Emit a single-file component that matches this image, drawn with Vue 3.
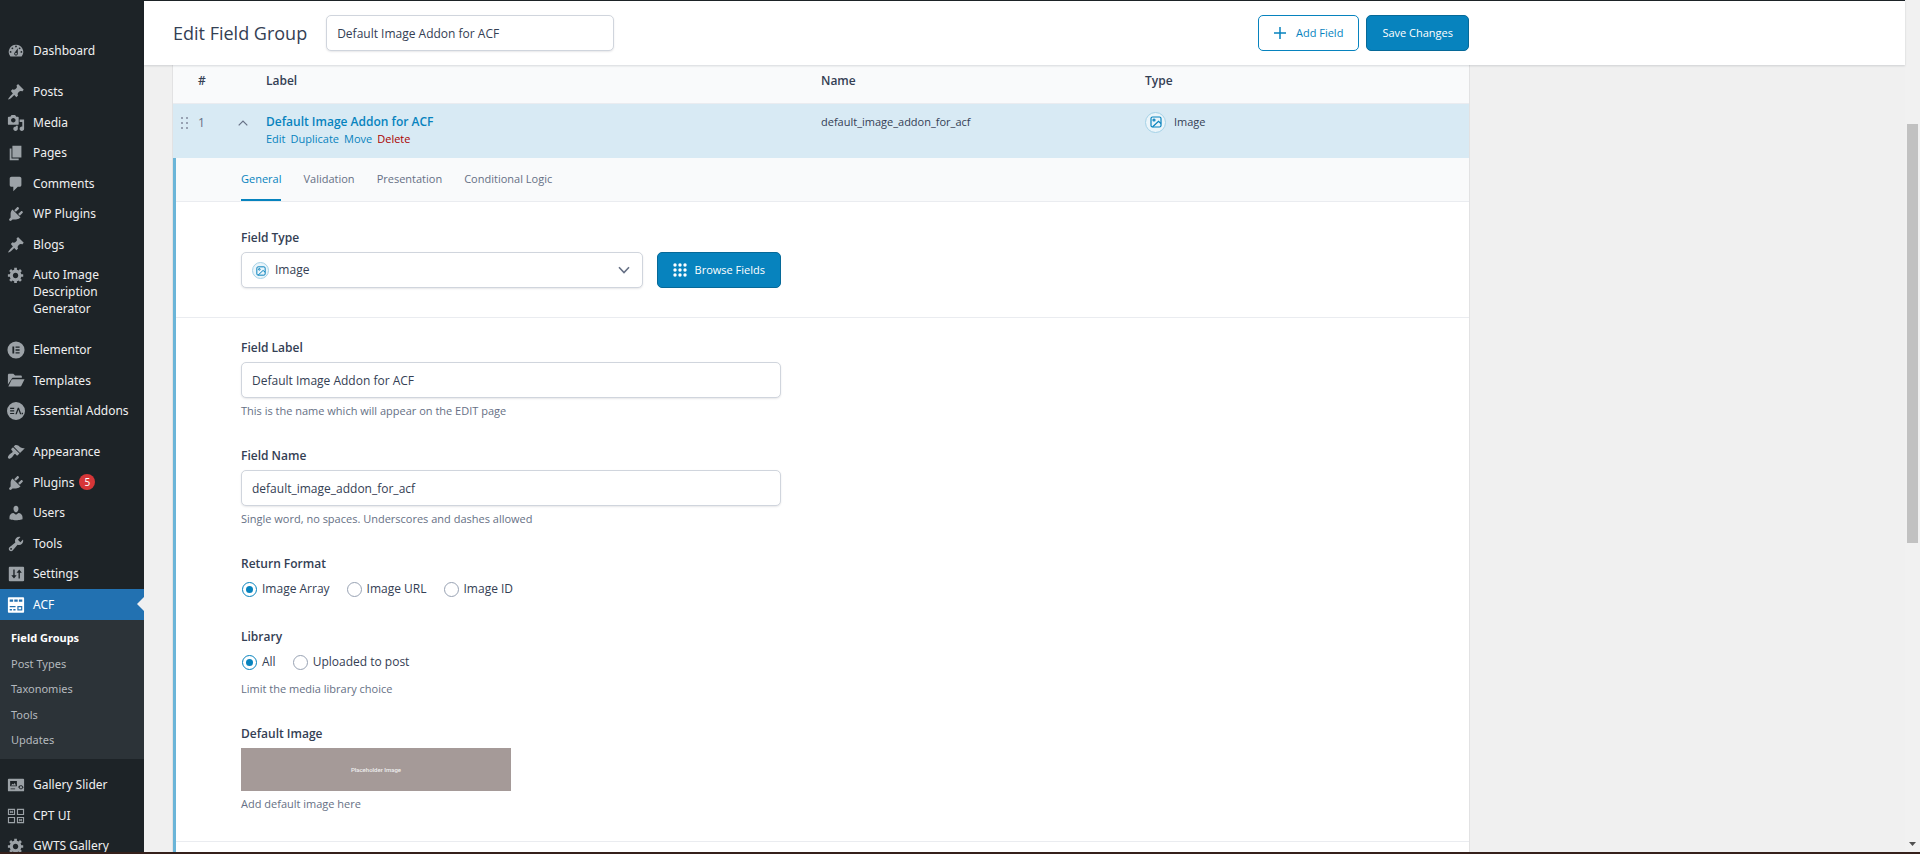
<script setup>
import { ref } from 'vue'

const pin = 'M10.44 3.02l1.82-1.82 6.36 6.35-1.83 1.82c-1.05-.68-2.48-.57-3.41.36l-.75.75c-.92.93-1.04 2.35-.35 3.41l-1.83 1.82-2.41-2.41-2.8 2.79c-.42.42-3.38 2.71-3.8 2.29s1.86-3.39 2.28-3.81l2.79-2.79L4.29 8.87l1.83-1.82c1.05.69 2.48.57 3.41-.36l.75-.75c.93-.92 1.05-2.35.16-2.92z'
const plug = 'M13.11 4.36L9.87 7.6 8 5.73l3.24-3.24c.35-.34 1.05-.2 1.56.32.52.51.66 1.21.31 1.55zm-8 1.77l.91-1.12 9.01 9.01-1.19.84c-.71.71-2.63 1.16-3.82 1.16H6.14L4.9 17.26c-.59.59-1.54.59-2.12 0-.59-.58-.59-1.53 0-2.12l1.24-1.24v-3.88c0-1.13.4-3.19 1.09-3.89zm7.26 3.97l3.24-3.24c.34-.35 1.04-.21 1.55.31.52.51.66 1.21.31 1.55l-3.24 3.25z'
const gear = 'M18 12h-2.18c-.17.7-.44 1.35-.81 1.93l1.54 1.54-2.1 2.1-1.54-1.54c-.58.36-1.23.63-1.91.79V19H8v-2.18c-.68-.16-1.33-.43-1.91-.79l-1.54 1.54-2.12-2.12 1.54-1.54c-.36-.58-.63-1.23-.79-1.91H1V9.03h2.17c.16-.7.44-1.35.8-1.94L2.43 5.55l2.1-2.1 1.54 1.54c.58-.37 1.24-.64 1.93-.81V2h3v2.18c.68.16 1.33.43 1.91.79l1.54-1.54 2.12 2.12-1.54 1.54c.36.59.64 1.24.8 1.94H18V12zm-8.5 1.5c1.66 0 3-1.34 3-3s-1.34-3-3-3-3 1.34-3 3 1.34 3 3 3z'

const icons = {
  dashboard: 'M3.76 16h12.48A7.998 7.998 0 0 0 10 3a7.998 7.998 0 0 0-6.24 13zM10 4c.55 0 1 .45 1 1s-.45 1-1 1-1-.45-1-1 .45-1 1-1zM6 6c.55 0 1 .45 1 1s-.45 1-1 1-1-.45-1-1 .45-1 1-1zm8 0c.55 0 1 .45 1 1s-.45 1-1 1-1-.45-1-1 .45-1 1-1zm-5.37 5.55L12 7v6c0 1.1-.9 2-2 2s-2-.9-2-2c0-.57.24-1.08.63-1.45zM4 10c.55 0 1 .45 1 1s-.45 1-1 1-1-.45-1-1 .45-1 1-1zm12 0c.55 0 1 .45 1 1s-.45 1-1 1-1-.45-1-1 .45-1 1-1zm-5 3c0-.55-.45-1-1-1s-1 .45-1 1 .45 1 1 1 1-.45 1-1z',
  pin,
  media: 'M13 11V4c0-.55-.45-1-1-1h-1.67L9 1H5L3.67 3H2c-.55 0-1 .45-1 1v7c0 .55.45 1 1 1h10c.55 0 1-.45 1-1zM7 4.5c1.38 0 2.5 1.12 2.5 2.5S8.38 9.5 7 9.5 4.5 8.38 4.5 7 5.62 4.5 7 4.5zM14 6h5v10.5c0 1.38-1.12 2.5-2.5 2.5S14 17.88 14 16.5s1.12-2.5 2.5-2.5c.17 0 .34.02.5.05V9h-3V6zm-4 8.05V13h2v3.5c0 1.38-1.12 2.5-2.5 2.5S7 17.88 7 16.5 8.12 14 9.5 14c.17 0 .34.02.5.05z',
  page: 'M6 15V2h10v13H6zm-1 1h8v2H3V5h2v11z',
  comment: 'M5 2h9c1.1 0 2 .9 2 2v7c0 1.1-.9 2-2 2h-2l-5 5v-5H5c-1.1 0-2-.9-2-2V4c0-1.1.9-2 2-2z',
  plug,
  gear,
  elementor: 'M10 .5a9.5 9.5 0 1 0 0 19 9.5 9.5 0 0 0 0-19zM6 6h2v8H6V6zm3.500 0H14v1.600H9.500V6zm0 3.200H14v1.600H9.500V9.200zm0 3.200H14V14H9.500v-1.600z',
  folder: 'M1 3.500c0-.8.500-1.500 1.300-1.500H7l2 2h6.500c.6 0 1 .4 1 1v1.500H7.200c-1 0-1.800.5-2.200 1.300L1 14V3.500zM6.300 8H19.500l-3.600 7.300c-.3.500-.8.700-1.300.700H1.500l3.600-7.300c.2-.5.700-.7 1.200-.7z',
  essential: 'M10 0a10 10 0 1 0 0 20 10 10 0 0 0 0-20zM3.500 6.500H8v1.300H3.500V6.500zm0 2.800H8v1.300H3.500V9.300zm0 2.800H8v1.300H3.500v-1.300zM12 6.500h1.300l2.700 7h-1.500l-1.800-4.900-1.900 4.900H9.300l2.700-7zM16.300 12h1.500v1.500h-1.500V12z',
  brush: 'M14.480 11.060L7.410 3.990l1.500-1.500c.5-.56 2.300-.47 3.510.32 1.210.8 1.430 1.280 2.910 2.100 1.180.64 2.450 1.260 4.450.85zm-.71.71L6.700 4.700 4.930 6.470c-.39.39-.39 1.020 0 1.410l1.060 1.060c.39.39.39 1.030 0 1.420-.6.6-1.430 1.110-2.210 1.690-.35.26-.7.53-1.010.84C1.430 14.230.4 16.080 1.400 17.070c.99 1 2.840-.03 4.180-1.360.31-.31.58-.66.85-1.020.57-.78 1.080-1.610 1.690-2.210.39-.39 1.020-.39 1.410 0l1.060 1.060c.39.39 1.020.39 1.410 0z',
  user: 'M10 9.250c-2.270 0-2.730-3.440-2.730-3.440C7 4.020 7.820 2 9.970 2c2.160 0 2.980 2.020 2.710 3.810 0 0-.41 3.440-2.680 3.440zm0 2.570L12.720 10c2.390 0 4.520 2.330 4.520 4.530v2.490s-3.650 1.130-7.240 1.130c-3.650 0-7.240-1.130-7.240-1.130v-2.490c0-2.250 1.940-4.480 4.470-4.480z',
  wrench: 'M16.680 9.770c-1.340 1.340-3.300 1.670-4.950.99l-5.410 6.520c-.99.99-2.590.99-3.580 0s-.99-2.590 0-3.570l6.520-5.420c-.68-1.650-.35-3.610.99-4.950 1.280-1.280 3.120-1.620 4.720-1.060l-2.890 2.890 2.820 2.820 2.860-2.870c.53 1.580.18 3.390-1.080 4.650zM3.810 16.210c.4.39 1.040.39 1.430 0 .4-.4.4-1.040 0-1.430-.39-.4-1.030-.4-1.430 0-.39.39-.39 1.030 0 1.430z',
  sliders: 'M19 17V3c0-.55-.45-1-1-1H3c-.55 0-1 .45-1 1v14c0 .55.45 1 1 1h15c.55 0 1-.45 1-1zM7 5h1.500v6.500h2.200L7.750 15 4.800 11.500H7V5zm5.800 10V8.500h-2.200L13.550 5l2.950 3.500h-2.200V15h-1.500z',
  acf: 'M2 1.500h16c.6 0 1 .4 1 1v15c0 .6-.4 1-1 1H2c-.6 0-1-.4-1-1v-15c0-.6.4-1 1-1zM3 4h3.800v2.500H3V4zm5.100 0h3.800v2.500H8.100V4zm5.100 0H17v2.500h-3.800V4zM3 11.200h6.500v1.300H3v-1.300zm0 3.300h2.500V16H3v-1.500zm4 0h2.500V16H7v-1.500zm4.500-3.300H17V16h-5.500v-4.800zm1.300 1.300v2.200h2.900v-2.200h-2.900z',
  gallery: 'M2 3h16c.6 0 1 .4 1 1v12c0 .6-.4 1-1 1H2c-.6 0-1-.4-1-1V4c0-.6.4-1 1-1zm1.500 2.500v6h7.500v-6H3.500zm1 5l1.500-2 1.200 1 1.300-1.700 1.500 2.700h-5.500zM12.500 12l2.300-2 .7.8-1.600 1.700 1.600 1.700-.7.800-2.300-2.500V12zm6 .5l-2.300 2.500-.6-.8 1.500-1.700-1.500-1.700.6-.8 2.300 2.500zM4 14h5v.8H4V14z',
  cpt: 'M1 2h8v7H1V2zm1.300 1.300v4.400h5.400V3.300H2.300zM11 2h8v7h-8V2zm1.300 1.300v4.400h5.400V3.300h-5.400zM1 11h8v7H1v-7zm1.300 1.300v4.400h5.400v-4.400H2.300zM11 11h8v7h-8v-7zm1.300 1.300v4.400h5.400v-4.400h-5.400zM3.600 4l1.400.9L6.400 4l.5.8-1 .7 1 .7-.5.8L5 6.100 3.600 7l-.5-.8 1-.7-1-.7.5-.8zM13.600 13l1.400.9 1.400-.9.5.8-1 .7 1 .7-.5.8-1.400-.9-1.400.9-.5-.8 1-.7-1-.7.5-.8z'
}

const groups = [
  [{ label: 'Dashboard', icon: 'dashboard' }],
  [
    { label: 'Posts', icon: 'pin' },
    { label: 'Media', icon: 'media' },
    { label: 'Pages', icon: 'page' },
    { label: 'Comments', icon: 'comment' },
    { label: 'WP Plugins', icon: 'plug' },
    { label: 'Blogs', icon: 'pin' },
    { label: 'Auto Image Description Generator', icon: 'gear' }
  ],
  [
    { label: 'Elementor', icon: 'elementor' },
    { label: 'Templates', icon: 'folder' },
    { label: 'Essential Addons', icon: 'essential' }
  ],
  [
    { label: 'Appearance', icon: 'brush' },
    { label: 'Plugins', icon: 'plug', count: 5 },
    { label: 'Users', icon: 'user' },
    { label: 'Tools', icon: 'wrench' },
    { label: 'Settings', icon: 'sliders' },
    {
      label: 'ACF',
      icon: 'acf',
      current: true,
      children: ['Field Groups', 'Post Types', 'Taxonomies', 'Tools', 'Updates']
    }
  ],
  [
    { label: 'Gallery Slider', icon: 'gallery' },
    { label: 'CPT UI', icon: 'cpt' },
    { label: 'GWTS Gallery', icon: 'gear' }
  ]
]

const tabs = ['General', 'Validation', 'Presentation', 'Conditional Logic']
const activeTab = ref('General')
const groupTitle = ref('Default Image Addon for ACF')
const fieldLabel = ref('Default Image Addon for ACF')
const fieldName = ref('default_image_addon_for_acf')
const fieldType = ref('Image')
const returnFormat = ref('Image Array')
const library = ref('All')
</script>

<template>
  <div class="screen">
    <div class="body">
      <nav class="sidebar" aria-label="Main menu">
        <ul v-for="(group, g) in groups" :key="g" class="menu">
          <li v-for="item in group" :key="item.label" :class="{ current: item.current }">
            <a href="#" class="menu-link">
              <svg class="menu-icon" viewBox="0 0 20 20" aria-hidden="true">
                <path fill-rule="evenodd" :d="icons[item.icon]" />
              </svg>
              <span>{{ item.label }}</span>
              <span v-if="item.count" class="count">{{ item.count }}</span>
            </a>
            <ul v-if="item.children" class="submenu">
              <li v-for="(child, c) in item.children" :key="child">
                <a href="#" :class="{ active: c === 0 }">{{ child }}</a>
              </li>
            </ul>
          </li>
        </ul>
      </nav>

      <div class="main">
        <header class="topbar">
          <div class="topbar-inner">
            <h1>Edit Field Group</h1>
            <input v-model="groupTitle" class="text title-input" type="text" aria-label="Field group title" />
            <div class="actions">
              <button type="button" class="btn outline">
                <svg class="plus" viewBox="0 0 12 12" aria-hidden="true"><path d="M6 0v12M0 6h12" /></svg>
                Add Field
              </button>
              <button type="button" class="btn solid">Save Changes</button>
            </div>
          </div>
        </header>

        <main class="content">
          <section class="panel">
            <table>
              <colgroup>
                <col class="col-order" />
                <col />
                <col class="col-quarter" />
                <col class="col-quarter" />
              </colgroup>
              <thead>
                <tr>
                  <th scope="col" class="order-head">#</th>
                  <th scope="col">Label</th>
                  <th scope="col">Name</th>
                  <th scope="col">Type</th>
                </tr>
              </thead>
              <tbody>
                <tr>
                  <td>
                    <div class="order">
                      <svg class="grip" viewBox="0 0 7 12" aria-hidden="true">
                        <path d="M0 0h2v2H0zM5 0h2v2H5zM0 5h2v2H0zM5 5h2v2H5zM0 10h2v2H0zM5 10h2v2H5z" />
                      </svg>
                      <span class="number">1</span>
                      <button type="button" class="toggle" aria-label="Collapse field">
                        <svg viewBox="0 0 10 6" aria-hidden="true"><path d="M.7 5.300 5 1l4.300 4.300" /></svg>
                      </button>
                    </div>
                  </td>
                  <td>
                    <a href="#" class="row-title">Default Image Addon for ACF</a>
                    <div class="row-links">
                      <a href="#">Edit</a>
                      <a href="#">Duplicate</a>
                      <a href="#">Move</a>
                      <a href="#" class="delete">Delete</a>
                    </div>
                  </td>
                  <td><div class="cell-line">default_image_addon_for_acf</div></td>
                  <td>
                    <div class="cell-line">
                      <span class="type-badge">
                        <svg viewBox="0 0 12 12" aria-hidden="true">
                          <rect x="1" y="1" width="10" height="10" rx="1.500" />
                          <circle cx="4" cy="4" r="1" />
                          <path d="M2.500 11 8.500 5.300 11 7.500" />
                        </svg>
                      </span>
                      Image
                    </div>
                  </td>
                </tr>
              </tbody>
            </table>

            <div class="settings">
              <div class="tabs" role="tablist">
                <button
                  v-for="tab in tabs"
                  :key="tab"
                  type="button"
                  role="tab"
                  :aria-selected="tab === activeTab"
                  :class="{ active: tab === activeTab }"
                  @click="activeTab = tab"
                >{{ tab }}</button>
              </div>

              <div class="block type-block">
                <div class="field">
                  <label for="field-type">Field Type</label>
                  <div class="type-row">
                    <div class="select-wrap">
                      <select id="field-type" v-model="fieldType" class="text">
                        <option>Image</option>
                      </select>
                      <span class="type-badge small">
                        <svg viewBox="0 0 12 12" aria-hidden="true">
                          <rect x="1" y="1" width="10" height="10" rx="1.500" />
                          <circle cx="4" cy="4" r="1" />
                          <path d="M2.500 11 8.500 5.300 11 7.500" />
                        </svg>
                      </span>
                      <svg class="caret" viewBox="0 0 12 8" aria-hidden="true"><path d="M1 1.200 6 6.500l5-5.300" /></svg>
                    </div>
                    <button type="button" class="btn solid browse">
                      <svg class="dots" viewBox="0 0 14 14" aria-hidden="true">
                        <template v-for="y in 3" :key="y">
                          <circle v-for="x in 3" :key="x" :cx="x * 5 - 3" :cy="y * 5 - 3" r="1.700" />
                        </template>
                      </svg>
                      Browse Fields
                    </button>
                  </div>
                </div>
              </div>

              <div class="block general-block">
                <div class="field">
                  <label for="field-label">Field Label</label>
                  <input id="field-label" v-model="fieldLabel" class="text" type="text" />
                  <p class="help">This is the name which will appear on the EDIT page</p>
                </div>
                <div class="field">
                  <label for="field-name">Field Name</label>
                  <input id="field-name" v-model="fieldName" class="text" type="text" />
                  <p class="help">Single word, no spaces. Underscores and dashes allowed</p>
                </div>
                <fieldset class="field">
                  <legend>Return Format</legend>
                  <div class="radios">
                    <label v-for="o in ['Image Array', 'Image URL', 'Image ID']" :key="o">
                      <input v-model="returnFormat" type="radio" name="return-format" :value="o" />{{ o }}
                    </label>
                  </div>
                </fieldset>
                <fieldset class="field">
                  <legend>Library</legend>
                  <div class="radios">
                    <label v-for="o in ['All', 'Uploaded to post']" :key="o">
                      <input v-model="library" type="radio" name="library" :value="o" />{{ o }}
                    </label>
                  </div>
                  <p class="help">Limit the media library choice</p>
                </fieldset>
                <div class="field">
                  <h2>Default Image</h2>
                  <div class="preview">Placeholder Image</div>
                  <p class="help">Add default image here</p>
                </div>
              </div>
              <div class="block rest"></div>
            </div>
          </section>
        </main>
      </div>

      <div class="scrollbar" aria-hidden="true">
        <div class="thumb"></div>
        <svg class="arrow" viewBox="0 0 7 4"><path d="M0 0h7L3.500 4z" /></svg>
      </div>
    </div>
    <div class="edge"></div>
  </div>
</template>

<style>
html, body { margin: 0; background: #f0f0f1; }
</style>

<style scoped>
* { box-sizing: border-box; }
.screen {
  display: flex;
  flex-direction: column;
  height: 100vh;
  overflow: hidden;
  font-family: "Open Sans", "Noto Sans", sans-serif;
  font-size: 12px;
  line-height: 16px;
  color: #344054;
}
.body { display: flex; flex: 1; min-height: 0; }
.edge { height: 2px; flex: none; background: #35201b; }
ul { margin: 0; padding: 0; list-style: none; }
a { text-decoration: none; }
button, input, select { font: inherit; color: inherit; }

.sidebar {
  flex: none;
  width: 144px;
  padding-top: 35px;
  overflow: hidden;
  background: #1d2327;
  font-family: "Noto Sans", sans-serif;
}
.menu { margin-bottom: 10px; }
.menu > li:nth-child(odd) { padding-bottom: 1px; }
.menu-link {
  display: flex;
  gap: 8px;
  min-height: 30px;
  padding: 7px 0 6px 7px;
  line-height: 17px;
  color: #f0f0f1;
}
.menu-icon { flex: none; width: 18px; height: 18px; margin-bottom: -1px; fill: #9ca2a7; }
.count {
  width: 16px;
  height: 16px;
  margin-left: -3px;
  border-radius: 8px;
  background: #d63638;
  color: #fff;
  font-size: 10px;
  line-height: 16px;
  text-align: center;
}
.current > .menu-link { position: relative; min-height: 31px; background: #2271b1; color: #fff; }
.current > .menu-link .menu-icon { fill: #fff; }
.current > .menu-link::after {
  content: "";
  position: absolute;
  right: 0;
  top: 8px;
  border: 7px solid transparent;
  border-left: 0;
  border-right-color: #f0f0f1;
}
.submenu { padding: 5px 0 6px; background: #2c3338; }
.submenu li:nth-child(odd) { padding-bottom: 1px; }
.submenu a {
  display: block;
  padding-left: 11px;
  font-size: 11px;
  line-height: 25px;
  color: #b4b9be;
}
.submenu a.active { color: #fff; font-weight: 700; }

.main { display: flex; flex: 1; flex-direction: column; min-width: 0; background: #f0f0f0; }
.topbar {
  position: relative;
  flex: none;
  padding: 14px 0 14px 29px;
  border-top: 1px solid #1d2327;
  background: #fff;
  box-shadow: 0 1px 2px rgba(16, 24, 40, 0.15);
}
.topbar-inner { display: flex; align-items: center; max-width: 1296px; }
h1 { margin: 0 19px 0 0; font-size: 18px; font-weight: 400; line-height: 24px; white-space: nowrap; }
.text {
  width: 100%;
  height: 36px;
  padding: 0 10px;
  border: 1px solid #d0d5dd;
  border-radius: 5px;
  background: #fff;
  box-shadow: 0 1px 2px rgba(16, 24, 40, 0.1);
}
.title-input { width: 288px; }
.actions { display: flex; gap: 7px; margin-left: auto; }
.btn {
  display: flex;
  align-items: center;
  justify-content: center;
  height: 36px;
  padding: 0 15px;
  border: 1px solid #0783be;
  border-radius: 5px;
  font-size: 11px;
  white-space: nowrap;
}
.outline { gap: 10px; background: #fff; color: #0783be; }
.solid { border-color: #066998; background: #0783be; color: #fff; }
.plus { width: 12px; height: 12px; stroke: #0783be; stroke-width: 1.5; }

.content { flex: 1; min-height: 0; padding-left: 29px; overflow: hidden; }
.panel {
  display: flex;
  flex-direction: column;
  max-width: 1296px;
  height: 100%;
  background: #fff;
  box-shadow: 0 0 0 1px rgba(16, 24, 40, 0.06);
}
table { width: 100%; table-layout: fixed; border-spacing: 0; }
.col-order { width: 93px; }
.col-quarter { width: 25%; }
th {
  height: 39px;
  padding: 8px 0 0;
  border-bottom: 1px solid #eaecf0;
  background: #f9fafb;
  font-size: 12px;
  font-weight: 600;
  text-align: left;
  vertical-align: top;
}
th.order-head { padding-left: 25px; }
td { height: 54px; padding: 9px 0 0; background: #d8eaf4; vertical-align: top; }
.order { display: flex; align-items: center; height: 20px; padding-left: 8px; }
.grip { width: 7px; height: 12px; margin-right: 10px; fill: #98a2b3; }
.number { width: 40px; color: #667085; }
.toggle { display: flex; padding: 0; border: 0; background: none; }
.toggle svg { width: 10px; height: 6px; fill: none; stroke: #667085; stroke-width: 1.2; }
.row-title { display: block; font-size: 12px; font-weight: 600; line-height: 18px; color: #0783be; }
.row-links { display: flex; gap: 5px; font-size: 11px; line-height: 16px; }
.row-links a { color: #0783be; }
.row-links a.delete { color: #a00; }
.cell-line { display: flex; align-items: center; gap: 8px; height: 18px; font-size: 11px; }
.type-badge {
  display: flex;
  align-items: center;
  justify-content: center;
  width: 21px;
  height: 21px;
  border: 1px solid #a5d2e7;
  border-radius: 50%;
  background: #ebf5fa;
}
.type-badge svg { width: 12px; height: 12px; fill: none; stroke: #0783be; stroke-width: 1.2; }

.settings { flex: 1; border-left: 3px solid #6bb5d8; }
.tabs {
  display: flex;
  gap: 22px;
  height: 44px;
  padding-left: 65px;
  border-bottom: 1px solid #eaecf0;
  background: #f9fafb;
}
.tabs button {
  padding: 0;
  border: 0;
  border-bottom: 2px solid transparent;
  background: none;
  color: #667085;
  font-size: 11px;
}
.tabs button.active { border-bottom-color: #0783be; color: #0783be; }
.block { padding: 0 65px; border-bottom: 1px solid #eaecf0; }
.type-block { padding-top: 28px; }
.general-block { padding-top: 22px; }
.rest { border: 0; }
.field { max-width: 540px; min-width: 0; margin: 0; padding: 0 0 29px; border: 0; }
.field > label, legend, h2 {
  display: block;
  margin: 0 0 6px;
  padding: 0;
  font-size: 12px;
  font-weight: 600;
  line-height: 16px;
}
.field > .text { display: block; }
.help { margin: 5px 0 0; font-size: 11px; color: #667085; }
.type-row { display: flex; gap: 14px; }
.select-wrap { position: relative; flex: 1; }
select.text { appearance: none; padding-left: 33px; }
.small { position: absolute; left: 11px; top: 10px; width: 17px; height: 17px; }
.small svg { width: 10px; height: 10px; }
.caret { position: absolute; right: 13px; top: 14px; width: 12px; height: 8px; fill: none; stroke: #667085; stroke-width: 1.6; }
.browse { gap: 8px; }
.dots { width: 14px; height: 14px; fill: #fff; }
.radios { display: flex; gap: 17px; height: 22px; padding-left: 1px; }
.radios label { display: flex; align-items: center; gap: 5px; }
.radios input {
  appearance: none;
  display: grid;
  place-items: center;
  width: 15px;
  height: 15px;
  margin: 0;
  border: 1px solid #98a2b3;
  border-radius: 50%;
  background: #fff;
}
.radios input:checked { border-color: #0783be; }
.radios input:checked::before { content: ""; width: 7px; height: 7px; border-radius: 50%; background: #0783be; }
.radios + .help { margin-top: 8px; }
.preview {
  display: grid;
  place-items: center;
  width: 50%;
  height: 43px;
  background: #a59a98;
  color: #eee;
  font-family: Roboto, sans-serif;
  font-size: 6px;
  font-weight: 500;
}

.scrollbar {
  display: flex;
  flex: none;
  flex-direction: column;
  align-items: center;
  justify-content: space-between;
  width: 15px;
  padding: 124px 0 6px;
  background: #f1f1f1;
}
.thumb { width: 11px; height: 58%; background: #c1c1c1; }
.arrow { width: 7px; height: 4px; fill: #505050; }
</style>
